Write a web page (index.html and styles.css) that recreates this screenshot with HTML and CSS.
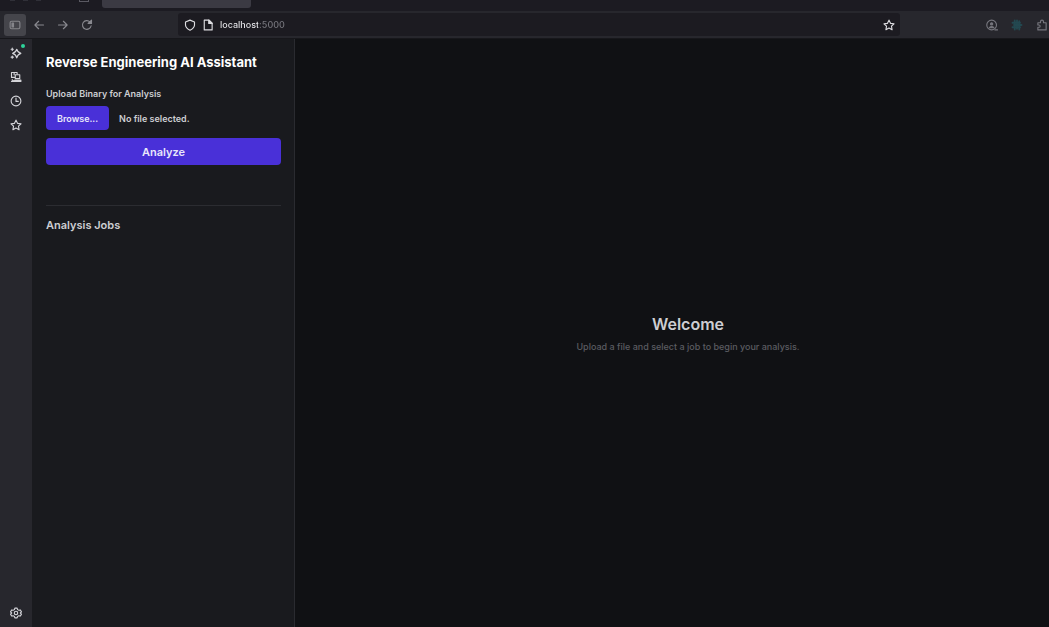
FILE: index.html
```html
<!DOCTYPE html>
<html lang="en">
<head>
  <meta charset="UTF-8">
  <meta name="viewport" content="width=device-width, initial-scale=1.0">
  <title>Reverse Engineering AI Assistant</title>
  <link rel="stylesheet" href="styles.css">
</head>
<body>
  <header class="browser">
    <div class="tab-strip">
      <span class="window-controls"><i></i><i></i><i></i></span>
      <span class="tab-list-icon"></span>
      <div class="tab"></div>
    </div>
    <div class="toolbar">
      <div class="nav">
        <button type="button" class="icon-btn active" aria-label="Show sidebar">
          <svg viewBox="0 0 16 16"><rect x="1.5" y="3" width="13" height="10" rx="2"/><rect x="4" y="5.5" width="2" height="5" class="solid"/></svg>
        </button>
        <button type="button" class="icon-btn" aria-label="Back">
          <svg viewBox="0 0 16 16"><path d="M14 8H2.5M7.5 3l-5 5 5 5"/></svg>
        </button>
        <button type="button" class="icon-btn" aria-label="Forward">
          <svg viewBox="0 0 16 16"><path d="M2 8h11.5M8.5 3l5 5-5 5"/></svg>
        </button>
        <button type="button" class="icon-btn" aria-label="Reload">
          <svg viewBox="0 0 16 16"><path d="M13.5 9A5.8 5.8 0 1 1 12 4"/><path d="M14 1.5V6H9.5z" class="solid"/></svg>
        </button>
      </div>
      <div class="address-bar">
        <svg viewBox="0 0 16 16"><path d="M8 1.5 14 4v4c0 3-3 5.5-6 7-3-1.5-6-4-6-7V4z"/></svg>
        <svg viewBox="0 0 16 16"><path d="M3 1.5h6.5l4 4v9H3z"/><path d="M9 1.5V6h4.5z" class="solid"/></svg>
        <input type="text" class="url" value="localhost:5000" aria-label="Address">
        <button type="button" class="icon-btn" aria-label="Bookmark this page">
          <svg viewBox="0 0 16 16"><path d="m8 1.5 2 4.3 4.7.6-3.4 3.2.8 4.7L8 12l-4.1 2.3.8-4.7L1.3 6.4 6 5.8z"/></svg>
        </button>
      </div>
      <div class="extensions">
        <button type="button" class="icon-btn" aria-label="Account">
          <svg viewBox="0 0 16 16"><circle cx="7.5" cy="8" r="6.5"/><circle cx="7.5" cy="6.5" r="1.5" class="solid"/><path d="M4.5 11.5c.5-2 5.5-2 6 0z" class="solid"/><path d="M12 14.5h3.5"/></svg>
        </button>
        <button type="button" class="icon-btn teal" aria-label="Extension">
          <svg viewBox="0 0 16 16"><path d="M2 5h10M4 8h10M2 11h10M5 2v12M8 2v11M11 3v11" stroke-width="2.5"/></svg>
        </button>
        <button type="button" class="icon-btn" aria-label="Extensions">
          <svg viewBox="0 0 16 16"><path d="M2.5 5H6V3.5a2 2 0 0 1 4 0V5h3.5v9.5h-11V11H4a1.5 1.5 0 0 0 0-3H2.5z"/></svg>
        </button>
      </div>
    </div>
  </header>

  <div class="content">
    <nav class="rail" aria-label="Sidebar tools">
      <button type="button" class="icon-btn ai" aria-label="AI chatbot">
        <svg viewBox="0 0 16 16"><path d="M9 3q1 4 5.5 5.5Q10 10 9 14.5 8 10 3.5 8.5 8 7 9 3z"/><path d="M3 1.5v3M1.5 3h3M3 12v3M1.5 13.5h3"/></svg>
      </button>
      <button type="button" class="icon-btn" aria-label="Synced tabs">
        <svg viewBox="0 0 16 16"><path d="M6 8.5H2V2h7.5v2M5.5 2v3"/><rect x="7" y="5" width="6" height="5"/><path d="M3 11.5V14M2 14h12.5v-2H7z" class="solid"/></svg>
      </button>
      <button type="button" class="icon-btn" aria-label="History">
        <svg viewBox="0 0 16 16"><circle cx="8" cy="8" r="6.5"/><path d="M8 4v4.5h3"/></svg>
      </button>
      <button type="button" class="icon-btn" aria-label="Bookmarks">
        <svg viewBox="0 0 16 16"><path d="m8 1.5 2 4.3 4.7.6-3.4 3.2.8 4.7L8 12l-4.1 2.3.8-4.7L1.3 6.4 6 5.8z"/></svg>
      </button>
      <button type="button" class="icon-btn settings" aria-label="Settings">
        <svg viewBox="0 0 16 16"><path d="M6.5 1.5h3l.6 2 1.7.9 2-.5 1.5 2.6L13.8 8l1.5 1.5-1.5 2.6-2-.5-1.7.9-.6 2h-3l-.6-2-1.7-.9-2 .5L.7 9.500 2.200 8 .7 6.500l1.500-2.600 2 .5 1.700-.9z"/><circle cx="8" cy="8" r="2.3"/></svg>
      </button>
    </nav>

    <aside class="sidebar">
      <h1>Reverse Engineering AI Assistant</h1>
      <form class="upload-form" id="upload-form">
        <label for="binary-file">Upload Binary for Analysis</label>
        <div class="file-row">
          <input type="file" id="binary-file" name="file" hidden>
          <button type="button" class="browse-btn" id="browse-btn">Browse...</button>
          <span id="file-name">No file selected.</span>
        </div>
        <button type="submit" class="analyze-btn">Analyze</button>
      </form>
      <section class="jobs">
        <h2>Analysis Jobs</h2>
        <ul id="job-list"></ul>
      </section>
    </aside>

    <main class="welcome">
      <h2>Welcome</h2>
      <p>Upload a file and select a job to begin your analysis.</p>
    </main>
  </div>

  <script>
    const fileInput = document.getElementById('binary-file');
    const fileName = document.getElementById('file-name');

    document.getElementById('browse-btn').addEventListener('click', () => fileInput.click());
    fileInput.addEventListener('change', () => {
      fileName.textContent = fileInput.files.length ? fileInput.files[0].name : 'No file selected.';
    });
    document.getElementById('upload-form').addEventListener('submit', (event) => {
      event.preventDefault();
      if (!fileInput.files.length) return;
      const job = document.createElement('li');
      job.textContent = fileInput.files[0].name;
      document.getElementById('job-list').appendChild(job);
    });
  </script>
</body>
</html>
```
FILE: styles.css
```css
* {
  box-sizing: border-box;
}
body {
  margin: 0;
  min-height: 100vh;
  display: flex;
  flex-direction: column;
  font-family: Inter, sans-serif;
  font-size: 9px;
  font-weight: 500;
  color: #cdced2;
  background-color: #101114;
  overflow-x: hidden;
}
h1, h2, p, ul {
  margin: 0;
}
button, input {
  font-family: inherit;
}
button {
  border: none;
  cursor: pointer;
}
svg {
  display: block;
  flex: none;
  width: 12px;
  height: 12px;
  fill: none;
  stroke: currentColor;
  stroke-width: 1.5;
  stroke-linejoin: round;
  stroke-linecap: round;
}
svg .solid {
  fill: currentColor;
}

/* Browser window */
.tab-strip {
  display: flex;
  align-items: flex-start;
  height: 11px;
  background-color: #1c1b22;
}
.window-controls {
  display: flex;
  gap: 8px;
  width: 79px;
  padding-left: 10px;
}
.window-controls i {
  width: 5px;
  height: 1px;
  background-color: #303038;
}
.tab-list-icon {
  width: 10px;
  height: 2px;
  margin-right: 13px;
  border: 1px solid #5a5962;
  border-top: none;
}
.tab {
  width: 149px;
  height: 8px;
  background-color: #3b3a43;
  border-radius: 0 0 3px 3px;
}
.toolbar {
  display: flex;
  align-items: center;
  height: 28px;
  background-color: #27272d;
  border-bottom: 1px solid #17171b;
}
.icon-btn {
  display: flex;
  align-items: center;
  justify-content: center;
  flex: none;
  width: 22px;
  height: 22px;
  padding: 0;
  color: inherit;
  background: none;
  border-radius: 3px;
}
.icon-btn.active {
  color: #86868b;
  background-color: #45454b;
}
.nav {
  display: flex;
  gap: 2px;
  flex: none;
  width: 178px;
  padding-left: 4px;
  color: #8a8a90;
}
.address-bar {
  display: flex;
  align-items: center;
  gap: 6px;
  flex: 1;
  min-width: 0;
  height: 23px;
  padding-left: 6px;
  color: #dedee2;
  background-color: #1c1b21;
  border-radius: 3px;
}
/* host is bright, port is dimmed */
.url {
  flex: 1;
  min-width: 0;
  padding: 0;
  border: none;
  outline: none;
  font-size: 9px;
  font-weight: 500;
  background: linear-gradient(to right, #eeeef2 38px, #77777e 38px);
  background-clip: text;
  -webkit-background-clip: text;
  color: transparent;
}
.extensions {
  display: flex;
  justify-content: flex-end;
  gap: 3px;
  flex: none;
  width: 153px;
  margin-right: -4px;
  color: #77777e;
}
.icon-btn.teal {
  color: #234850;
}

/* Page */
.content {
  flex: 1;
  display: flex;
}
.rail {
  display: flex;
  flex-direction: column;
  align-items: center;
  gap: 2px;
  width: 32px;
  padding: 3px 0;
  color: #d4d4d9;
  background-color: #27272d;
}
.rail .settings {
  margin-top: auto;
}
.ai {
  position: relative;
}
.ai::after {
  content: "";
  position: absolute;
  top: 2px;
  right: 2px;
  width: 4px;
  height: 4px;
  border-radius: 50%;
  background-color: #2ed39a;
}
.sidebar {
  width: 263px;
  padding: 14px 13px 14px 14px;
  background-color: #191a1e;
  border-right: 1px solid #2a2b30;
}
.sidebar h1 {
  margin-bottom: 16px;
  font-size: 13px;
  font-weight: 700;
  line-height: 18px;
  color: #fff;
}
.upload-form {
  display: flex;
  flex-direction: column;
}
.upload-form label {
  margin-bottom: 5px;
  font-weight: 600;
  line-height: 14px;
}
.file-row {
  display: flex;
  align-items: center;
  gap: 10px;
  margin-bottom: 8px;
  font-weight: 600;
}
.browse-btn, .analyze-btn {
  color: #e8e6fb;
  background-color: #4930d8;
  border-radius: 4px;
  font-weight: 600;
}
.browse-btn {
  height: 24px;
  padding: 0 11px;
  font-size: 9px;
}
.analyze-btn {
  height: 27px;
  font-size: 11px;
}
.browse-btn:hover, .analyze-btn:hover {
  background-color: #4338ca;
}
.jobs {
  margin-top: 40px;
  padding-top: 12px;
  border-top: 1px solid #2b2c31;
}
.jobs h2 {
  font-size: 11px;
  font-weight: 600;
  line-height: 14px;
}
.jobs ul {
  padding: 8px 0;
  list-style: none;
}
.welcome {
  flex: 1;
  display: flex;
  flex-direction: column;
  align-items: center;
  justify-content: center;
  gap: 4px;
  padding-left: 32px;
}
.welcome h2 {
  font-size: 16px;
  font-weight: 600;
  line-height: 24px;
}
.welcome p {
  line-height: 14px;
  color: #5b5c61;
}
```
